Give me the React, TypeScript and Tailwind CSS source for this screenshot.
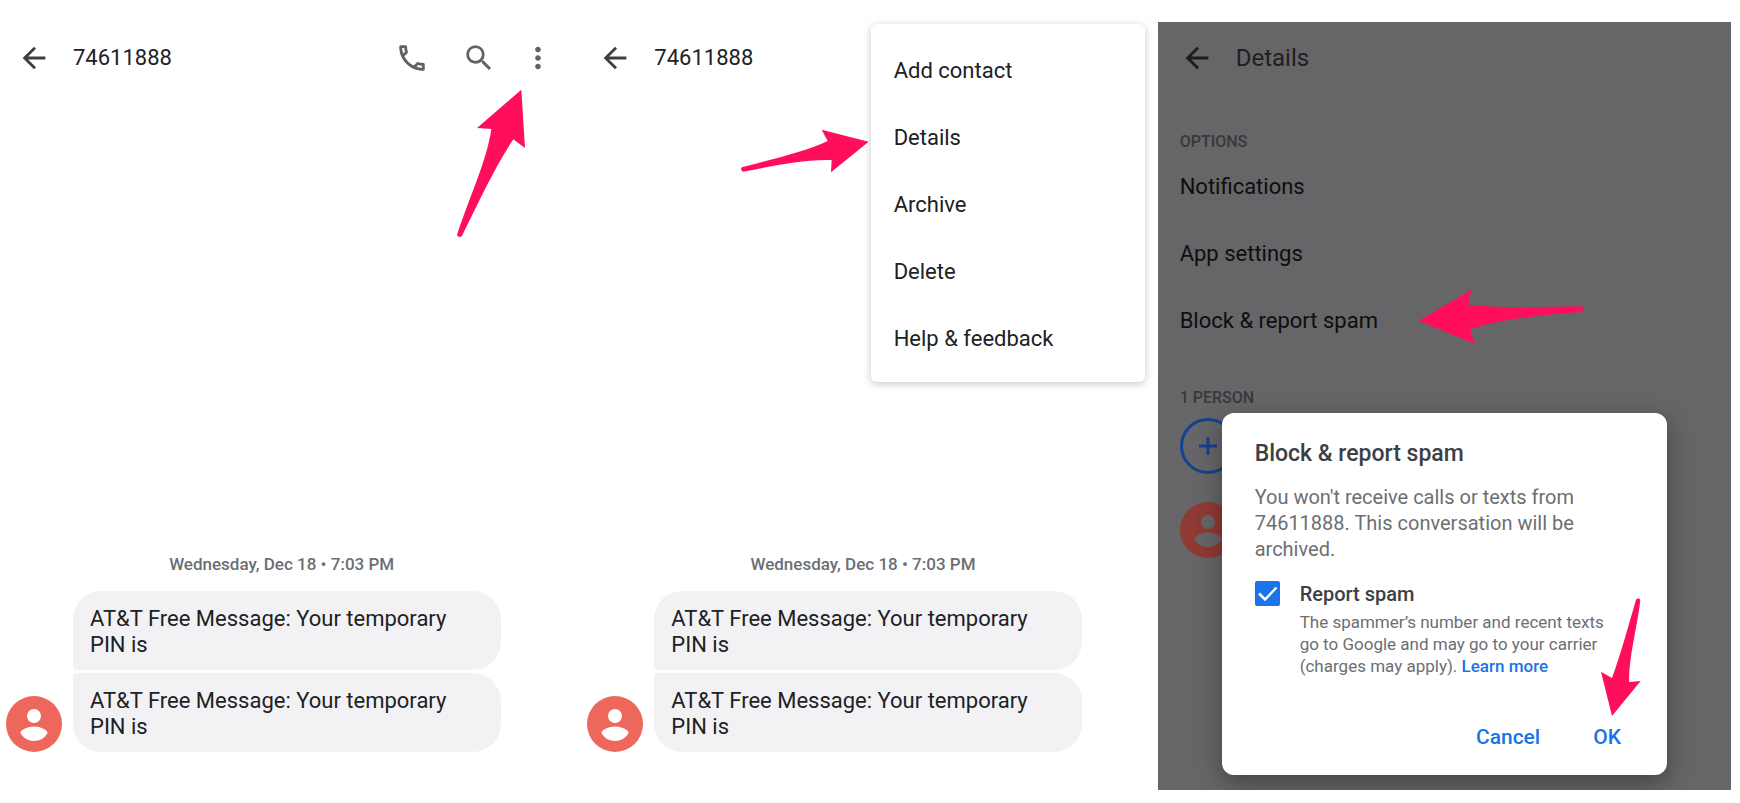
import { useState, type ReactNode } from 'react'
import { MdArrowBack, MdMoreVert, MdOutlineCall, MdSearch } from 'react-icons/md'

const MENU_ITEMS = ['Add contact', 'Details', 'Archive', 'Delete', 'Help & feedback']
const OPTIONS = ['Notifications', 'App settings', 'Block & report spam']
const MESSAGE = 'AT&T Free Message: Your temporary PIN is'

// fill colour comes from text-*, the figure from fill-*
function Avatar({ className }: { className: string }) {
  return (
    <svg viewBox="0 0 56 56" className={`size-14 shrink-0 ${className}`} aria-hidden="true">
      <circle cx="28" cy="28" r="28" fill="currentColor" />
      <circle cx="28" cy="20" r="7" />
      <path d="M28 30.500c6 0 13.500 3 13.500 6.500C39 42 33.500 45 28 45s-11-3-13.500-8c0-3.500 7.500-6.500 13.500-6.500z" />
    </svg>
  )
}

function Conversation() {
  return (
    <div className="mt-auto pb-[38px]">
      <p className="text-center text-[17px] font-medium leading-6 text-[#6b6f73]">
        Wednesday, Dec 18 • 7:03 PM
      </p>
      <div className="mt-[15px] flex items-end gap-[11px] pl-[11px]">
        <Avatar className="fill-white text-[#ee675c]" />
        <div className="flex w-[428px] flex-col gap-[3px] text-[22px] leading-[26px] text-[#202124]">
          <p className="rounded-[28px] rounded-bl bg-[#f2f2f5] px-[17px] pb-3 pt-[15px]">{MESSAGE}</p>
          <p className="rounded-[28px] rounded-tl bg-[#f2f2f5] px-[17px] pb-3 pt-[15px]">{MESSAGE}</p>
        </div>
      </div>
    </div>
  )
}

function TopBar({ title, titleClass, children }: { title: string; titleClass: string; children?: ReactNode }) {
  return (
    <header className="flex h-[72px] items-center pl-[22px] pr-3">
      <button type="button" aria-label="Back" className="text-[#3c4043]">
        <MdArrowBack size={34} />
      </button>
      <h1 className={`ml-[22px] leading-7 ${titleClass}`}>{title}</h1>
      {children}
    </header>
  )
}

function BlockDialog() {
  const [report, setReport] = useState(true)

  return (
    <div
      role="dialog"
      aria-labelledby="block-title"
      className="absolute inset-x-16 bottom-[15px] rounded-xl bg-white px-[33px] pb-4 pt-[25px] shadow-[0_8px_24px_rgba(0,0,0,0.35)]"
    >
      <h2 id="block-title" className="text-[23px] font-medium leading-8 text-[#3c4043]">
        Block &amp; report spam
      </h2>
      <p className="mt-[14px] text-xl leading-[26px] text-[#6b6f73]">
        You won't receive calls or texts from 74611888. This conversation will be archived.
      </p>
      <div className="mt-4 flex gap-5">
        <span className="relative mt-[3px] size-[25px] shrink-0">
          <input
            id="report"
            type="checkbox"
            checked={report}
            onChange={(e) => setReport(e.target.checked)}
            className="block size-full appearance-none rounded-xs border-2 border-[#1a73e8] checked:bg-[#1a73e8]"
          />
          {report && (
            <svg viewBox="0 0 25 25" className="pointer-events-none absolute inset-0" aria-hidden="true">
              <path d="M4 12.500l6 6L21.500 6.500" fill="none" stroke="#fff" strokeWidth="2.500" />
            </svg>
          )}
        </span>
        <div className="w-[310px] shrink-0">
          <label htmlFor="report" className="block text-xl font-medium leading-8 text-[#3c4043]">
            Report spam
          </label>
          <p className="mt-px text-[17px] leading-[22px] text-[#6b6f73]">
            The spammer’s number and recent texts go to Google and may go to your carrier (charges may apply).{' '}
            <a href="#learn-more" className="font-medium text-[#1a73e8]">Learn more</a>
          </p>
        </div>
      </div>
      <div className="mt-[38px] flex justify-end gap-[53px] pr-[13px] text-[21px] font-medium leading-7 text-[#1a73e8]">
        <button type="button" className="py-2">Cancel</button>
        <button type="button" className="py-2">OK</button>
      </div>
      <svg viewBox="0 0 210 510" className="pointer-events-none absolute left-[368px] top-[178px] h-[170px] w-[70px]" fill="#ff0f5b" aria-hidden="true">
        <path d="M66 375L33 242L66 261C92 190 115 105 138 26Q144 17 151 26C143 105 117 190 117 273L152 270Z" />
      </svg>
    </div>
  )
}

function App() {
  return (
    <main className="-ml-[5px] mr-[9px] grid min-h-screen grid-cols-3 gap-2 overflow-hidden pb-[13px] pt-[22px] font-['Roboto',sans-serif]">
      <section className="relative flex flex-col">
        <TopBar title="74611888" titleClass="text-[22px] text-[#202124]">
          <div className="ml-auto mr-[1px] flex items-center text-[#5f6368]">
            <button type="button" aria-label="Call"><MdOutlineCall size={34} /></button>
            <button type="button" aria-label="Search" className="ml-[33px]"><MdSearch size={34} /></button>
            <button type="button" aria-label="More options" className="ml-[25px]"><MdMoreVert size={34} /></button>
          </div>
        </TopBar>
        <Conversation />
        <svg viewBox="0 0 300 495" className="pointer-events-none absolute left-[445px] top-[58px] h-[165px] w-[100px]" fill="#ff0f5b" aria-hidden="true">
          <path d="M244 29L255 204L220 178C166 258 114 370 66 467Q58 476 51 466C88 350 140 245 154 147L111 144Z" />
        </svg>
      </section>

      <section className="relative flex flex-col">
        <TopBar title="74611888" titleClass="text-[22px] text-[#202124]" />
        <Conversation />
        <div role="menu" className="absolute right-[5px] top-[2px] w-[274px] rounded-md bg-white pb-[10px] pt-[13px] shadow-[0_2px_8px_rgba(0,0,0,0.22)]">
          {MENU_ITEMS.map((item) => (
            <button key={item} type="button" role="menuitem" className="block h-[67px] w-full px-[23px] text-left text-[22px] text-[#202124]">
              {item}
            </button>
          ))}
        </div>
        <svg viewBox="0 0 450 180" className="pointer-events-none absolute left-[154px] top-[98px] h-[60px] w-[150px]" fill="#ff0f5b" aria-hidden="true">
          <path d="M416 65L303 157L305 120C220 117 130 138 40 155Q30 151 35 142C120 118 220 98 293 63L275 29Z" />
        </svg>
      </section>

      {/* dimmed behind the dialog */}
      <section className="relative flex flex-col overflow-hidden bg-[#666567]">
        <div className="[&_header_button]:text-[#1b1c1e]">
          <TopBar title="Details" titleClass="text-2xl text-[#1f2022]" />
        </div>
        <div className="mt-[37px] px-[22px]">
          <h2 className="text-base font-medium leading-[22px] text-[#38393b]">OPTIONS</h2>
          <ul className="text-[22px] text-[#0e0e0f]">
            {OPTIONS.map((option) => (
              <li key={option}>
                <button type="button" className="block h-[67px] w-full text-left">{option}</button>
              </li>
            ))}
          </ul>
          <h2 className="mt-8 text-base font-medium leading-6 text-[#38393b]">1 PERSON</h2>
          <button type="button" aria-label="Add people" className="mt-2 flex size-14 items-center justify-center rounded-full border-3 border-[#13438f]">
            <svg viewBox="0 0 18 18" className="size-[18px]" stroke="#13438f" strokeWidth="3" aria-hidden="true">
              <path d="M9 0V18M0 9H18" />
            </svg>
          </button>
          <div className="mt-7">
            <Avatar className="fill-[#666567] text-[#8f3a34]" />
          </div>
        </div>
        <svg viewBox="0 0 600 210" className="pointer-events-none absolute left-[242px] top-[258px] h-[70px] w-[200px]" fill="#ff0f5b" aria-hidden="true">
          <path d="M56 122L214 29L205 75C320 86 435 80 546 79Q560 87 547 96C430 104 310 116 210 147L224 191Z" />
        </svg>
        <BlockDialog />
      </section>
    </main>
  )
}

export default App
